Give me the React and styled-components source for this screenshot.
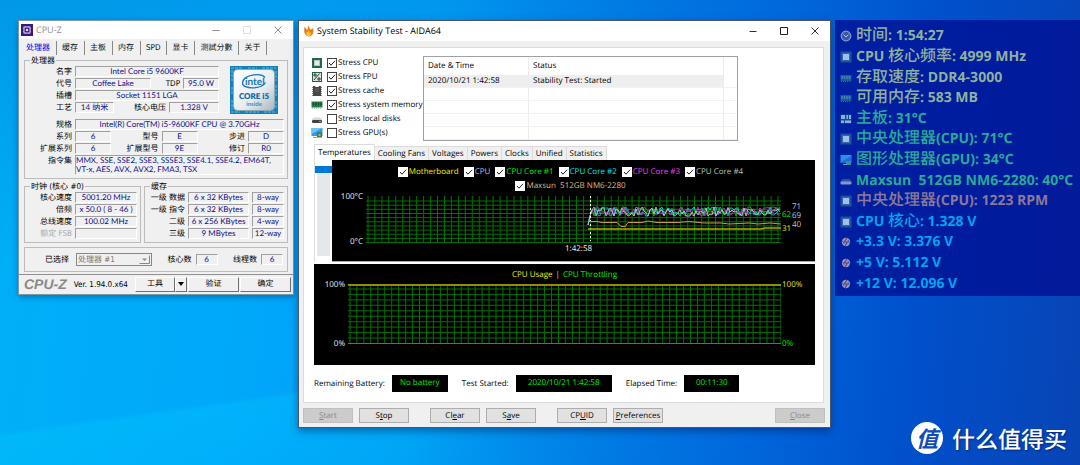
import { useState } from 'react'
import styled, { createGlobalStyle } from 'styled-components'

const coreColors = ['#00c800', '#00d8e0', '#e030e0', '#c8d4d8']

// repeatable jagged line for a core temperature
function coreLine(seed) {
    let value = seed * 7919
    const points = ['222,29', '224,20', '226,14']
    for (let x = 228; x <= 415; x += 2) {
        value = (value * 1103 + 12345) % 65521
        points.push(`${x},${11 + (value % 10)}`)
    }
    return points.join(' ')
}

const temperatureLegend = [
    { name: 'Motherboard', color: '#f0f000' },
    { name: 'CPU', color: '#a8c0f8' },
    { name: 'CPU Core #1', color: '#00f000' },
    { name: 'CPU Core #2', color: '#00ecf0' },
    { name: 'CPU Core #3', color: '#f040f0' },
    { name: 'CPU Core #4', color: '#b4c8b4' },
]

const sensors = [
    { icon: 'clock', text: '时间: 1:54:27', color: '#8fb09c' },
    { icon: 'chip', text: 'CPU 核心频率: 4999 MHz', color: '#8fb09c' },
    { icon: 'memory', text: '存取速度: DDR4-3000', color: '#8fb09c' },
    { icon: 'memory', text: '可用内存: 583 MB', color: '#8fb09c' },
    { icon: 'board', text: '主板: 31°C', color: '#2aa898' },
    { icon: 'chip', text: '中央处理器(CPU): 71°C', color: '#2aa898' },
    { icon: 'gpu', text: '图形处理器(GPU): 34°C', color: '#2aa898' },
    { icon: 'disk', text: 'Maxsun  512GB NM6-2280: 40°C', color: '#2aa898' },
    { icon: 'chip', text: '中央处理器(CPU): 1223 RPM', color: '#8c7898' },
    { icon: 'chip', text: 'CPU 核心: 1.328 V', color: '#00a4ec' },
    { icon: 'power', text: '+3.3 V: 3.376 V', color: '#00a4ec' },
    { icon: 'power', text: '+5 V: 5.112 V', color: '#00a4ec' },
    { icon: 'power', text: '+12 V: 12.096 V', color: '#00a4ec' },
]

const stressOptions = [
    { icon: 'cpu', name: 'Stress CPU', on: true },
    { icon: 'fpu', name: 'Stress FPU', on: true },
    { icon: 'cache', name: 'Stress cache', on: true },
    { icon: 'ram', name: 'Stress system memory', on: true },
    { icon: 'drive', name: 'Stress local disks', on: false },
    { icon: 'screen', name: 'Stress GPU(s)', on: false },
]

function SensorIcon({ kind }) {
    return (
        <svg width="12" height="12" viewBox="0 0 12 12" aria-hidden="true">
            {kind === 'clock' && (
                <g>
                    <circle cx="6" cy="6" r="4.8" fill="#3858b0" stroke="#8298c8" strokeWidth="1.2" />
                    <path d="M3.5 4.5 6 7l2.5-2.5" fill="none" stroke="#b4c4e4" />
                </g>
            )}
            {kind === 'chip' && (
                <g>
                    <rect x="0.5" y="0.5" width="11" height="11" fill="#18549c" />
                    <rect x="2" y="2" width="8" height="8" fill="#3068a4" />
                    <rect x="3" y="3" width="6" height="6" fill="#a4bcec" />
                </g>
            )}
            {kind === 'memory' && (
                <g>
                    <rect x="0.5" y="3" width="11" height="6" fill="#145c94" />
                    <path d="M2 4v3M4.5 4v3M7 4v3M9.500 4v3" stroke="#4880b4" strokeWidth="1.5" />
                    <path d="M1 9.5h10" stroke="#3870a4" strokeDasharray="1 1" />
                </g>
            )}
            {kind === 'board' && (
                <g>
                    <rect x="0.500" y="1.500" width="11" height="9" fill="#145090" />
                    <path d="M1 2h4v4H1zM6.500 2H8v4H6.500zM9 2h2v4H9zM1 7.500h3V10H1zM5 7.500h6V10H5z" fill="#88b0e0" />
                </g>
            )}
            {kind === 'gpu' && (
                <g>
                    <rect x="0.500" y="1" width="11" height="8" fill="#2890f0" />
                    <path d="M1 8 11 2v7H1z" fill="#1c6cd8" />
                    <rect x="6" y="7" width="5" height="4" fill="#3888a0" />
                    <path d="M3 10.500h4" stroke="#6c98d4" />
                </g>
            )}
            {kind === 'disk' && (
                <g>
                    <path d="M2.500 4h7L11.500 7H.5z" fill="#3050a8" />
                    <rect x="0.500" y="6.500" width="11" height="3" rx="1" fill="#8098d0" />
                </g>
            )}
            {kind === 'power' && (
                <g>
                    <circle cx="6" cy="6" r="4.200" fill="#8ca0cc" />
                    <path d="M7 2 4.200 6h3.200L5 10" fill="none" stroke="#783868" strokeWidth="1.200" />
                    <path d="M2.500 4.500 4 8M8 4l1.500 3.500" stroke="#3c58a8" />
                </g>
            )}
        </svg>
    )
}

function StressIcon({ kind }) {
    return (
        <svg width="12" height="12" viewBox="0 0 12 12" aria-hidden="true">
            {kind === 'cpu' && (
                <g>
                    <rect x="1" y="1" width="10" height="10" fill="#24684c" />
                    <rect x="3.500" y="3.500" width="5" height="5" fill="#e8ece8" stroke="#b4c4b8" />
                </g>
            )}
            {kind === 'fpu' && (
                <g>
                    <rect x="1" y="1" width="10" height="10" fill="#24604c" />
                    <rect x="2" y="2" width="8" height="8" fill="#dce4dc" />
                    <path d="M8.500 2.500 3 9M3 3h2v2H3zM7 7h2v2H7z" fill="none" stroke="#2c4038" />
                </g>
            )}
            {kind === 'cache' && (
                <g>
                    <path d="M2 1h2l.5 1h3L8 1h2v10H2z" fill="#484848" />
                    <path d="M1.500 2v9M10.500 2v9" stroke="#888" strokeDasharray="1 1" />
                    <path d="M4 4h4M4 6h4" stroke="#666" />
                </g>
            )}
            {kind === 'ram' && (
                <g>
                    <rect x="0.500" y="2.500" width="11" height="6" fill="#28804c" />
                    <path d="M2.500 3.500v3M5 3.500v3M7.500 3.500v3M10 3.500v3" stroke="#184c30" strokeWidth="1.400" />
                    <path d="M1 9h10" stroke="#78a884" strokeDasharray="1 1" />
                </g>
            )}
            {kind === 'drive' && (
                <g>
                    <path d="M2.500 4.500h7l2 2.500H.5z" fill="#d8d8d8" />
                    <rect x="1" y="7" width="10" height="3" rx="1" fill="#404440" />
                    <rect x="8" y="8" width="2" height="1" fill="#48c848" />
                </g>
            )}
            {kind === 'screen' && (
                <g>
                    <rect x="0.500" y="1" width="11" height="8" fill="#2c9ce4" />
                    <path d="M.5 1h11L.5 7z" fill="#6cc4f4" />
                    <rect x="6" y="5.500" width="5" height="5" fill="#38784c" />
                    <circle cx="8.500" cy="8" r="1.300" fill="#c8a848" />
                    <path d="M2 10.500h4" stroke="#88a0b0" />
                </g>
            )}
        </svg>
    )
}

function WindowButtons({ color, boxColor }) {
    return (
        <Controls>
            <ControlButton aria-label="Minimize">
                <svg width="8" height="8" viewBox="0 0 8 8"><path d="M0.500 4.500h7" stroke={color} /></svg>
            </ControlButton>
            <ControlButton aria-label="Maximize">
                <svg width="8" height="8" viewBox="0 0 8 8"><path d="M.5.5h7v7h-7z" fill="none" stroke={boxColor} /></svg>
            </ControlButton>
            <ControlButton aria-label="Close">
                <svg width="8" height="8" viewBox="0 0 8 8"><path d="m.5.5 7 7m0-7-7 7" stroke={color} /></svg>
            </ControlButton>
        </Controls>
    )
}

function CpuZ() {
    return (
        <CpuWindow>
            <CpuTitle>
                <svg width="12" height="12" viewBox="0 0 12 12" aria-hidden="true">
                    <rect width="12" height="12" fill="#381878" />
                    <rect x="3" y="3" width="6" height="6" fill="none" stroke="#e0d8f0" />
                    <path d="M2 4.500h1M2 7.500h1M9 4.500h1M9 7.500h1M4.500 2v1M7.500 2v1M4.500 9v1M7.500 9v1" stroke="#b8a8dc" />
                    <circle cx="6" cy="6" r="1.300" fill="#e0d8f0" />
                </svg>
                CPU-Z
                <WindowButtons color="#909090" boxColor="#e0e0e0" />
            </CpuTitle>
            <CpuTabs role="tablist">
                {['处理器', '缓存', '主板', '内存', 'SPD', '显卡', '测試分數', '关于'].map((name, i) => (
                    <CpuTab key={name} role="tab" $active={i === 0}>{name}</CpuTab>
                ))}
            </CpuTabs>
            <CpuPage>
                <Group>
                    <legend>处理器</legend>
                    <Split>
                        <Rows>
                            <Row><Label>名字</Label><Field>Intel Core i5 9600KF</Field></Row>
                            <Row><Label>代号</Label><Field>Coffee Lake</Field><Label $width={26}>TDP</Label><Field $width={36}>95.0 W</Field></Row>
                            <Row><Label>插槽</Label><Field>Socket 1151 LGA</Field></Row>
                            <Row><Label>工艺</Label><Field $width={39}>14 纳米</Field><Label $grow>核心电压</Label><Field $width={50}>1.328 V</Field></Row>
                        </Rows>
                        <IntelLogo />
                    </Split>
                    <Rows>
                        <Row><Label>规格</Label><Field>Intel(R) Core(TM) i5-9600KF CPU @ 3.70GHz</Field></Row>
                        <Row>
                            <Label>系列</Label><Field $width={36}>6</Field>
                            <Label $grow>型号</Label><Field $width={36}>E</Field>
                            <Label $grow>步进</Label><Field $width={36}>D</Field>
                        </Row>
                        <Row>
                            <Label>扩展系列</Label><Field $width={36}>6</Field>
                            <Label $grow>扩展型号</Label><Field $width={36}>9E</Field>
                            <Label $grow>修订</Label><Field $width={36}>R0</Field>
                        </Row>
                        <Row>
                            <Label>指令集</Label>
                            <Instructions>MMX, SSE, SSE2, SSE3, SSSE3, SSE4.1, SSE4.2, EM64T, VT-x, AES, AVX, AVX2, FMA3, TSX</Instructions>
                        </Row>
                    </Rows>
                </Group>
                <Halves>
                    <Group>
                        <legend>时钟 (核心 #0)</legend>
                        <Rows>
                            <Row><Label>核心速度</Label><Field>5001.20 MHz</Field></Row>
                            <Row><Label>倍频</Label><Field>x 50.0 ( 8 - 46 )</Field></Row>
                            <Row><Label>总线速度</Label><Field>100.02 MHz</Field></Row>
                            <Row><Label $off>额定 FSB</Label><Field /></Row>
                        </Rows>
                    </Group>
                    <Group>
                        <legend>缓存</legend>
                        <Rows>
                            <Row><Label $width={37}>一级 数据</Label><Field>6 x 32 KBytes</Field><Field $width={32}>8-way</Field></Row>
                            <Row><Label $width={37}>一级 指令</Label><Field>6 x 32 KBytes</Field><Field $width={32}>8-way</Field></Row>
                            <Row><Label $width={37}>二级</Label><Field>6 x 256 KBytes</Field><Field $width={32}>4-way</Field></Row>
                            <Row><Label $width={37}>三级</Label><Field>9 MBytes</Field><Field $width={32}>12-way</Field></Row>
                        </Rows>
                    </Group>
                </Halves>
                <SelectionBar>
                    <label htmlFor="processor">已选择</label>
                    <SelectBox>
                        <select id="processor" disabled defaultValue="1">
                            <option value="1">处理器 #1</option>
                        </select>
                        <svg width="11" height="9" viewBox="0 0 11 9" aria-hidden="true">
                            <path d="M0 0h11v9H0z" fill="#f0f0f0" />
                            <path d="M.5 8.500h10V.5" fill="none" stroke="#888" />
                            <path d="M3 3.500h5L5.500 6z" fill="#888" />
                        </svg>
                    </SelectBox>
                    <Label $grow>核心数</Label><Field $width={22}>6</Field>
                    <Label $grow>线程数</Label><Field $width={22}>6</Field>
                </SelectionBar>
            </CpuPage>
            <CpuFooter>
                <Brand>CPU-Z</Brand>
                <Version>Ver. 1.94.0.x64</Version>
                <ToolButtons>
                    <CpuButton>工具</CpuButton>
                    <ArrowButton aria-label="更多工具">
                        <svg width="6" height="4" viewBox="0 0 6 4"><path d="M0 0h6L3 4z" fill="#000" /></svg>
                    </ArrowButton>
                </ToolButtons>
                <CpuButton>验证</CpuButton>
                <CpuButton>确定</CpuButton>
            </CpuFooter>
        </CpuWindow>
    )
}

function IntelLogo() {
    return (
        <svg width="48" height="48" viewBox="0 0 48 48" role="img" aria-label="Intel Core i5 inside">
            <defs>
                <linearGradient id="plate" x1="0" y1="0" x2="1" y2="1">
                    <stop offset="0" stopColor="#ffffff" />
                    <stop offset="0.600" stopColor="#e8ecee" />
                    <stop offset="1" stopColor="#a8b4bc" />
                </linearGradient>
            </defs>
            <rect width="48" height="48" fill="#1480b8" />
            <path d="M1 2h12M18 2h9M32 2h14M1 46h9M15 46h14M34 46h12M2 4v12M2 21v8M2 34v10M46 5v10M46 19v12M46 35v8" stroke="#64b8e0" strokeDasharray="3 1" />
            <rect x="3.500" y="3.500" width="41" height="41" rx="4" fill="url(#plate)" stroke="#88a8b8" />
            <path d="M35 11.500c-4-5-22-3-22.500 5.500 0 6.500 19 6.500 23-.5" fill="none" stroke="#1478b8" strokeWidth="1.300" />
            <text x="15" y="19" fontSize="10" fontWeight="700" fill="#1478b8" fontFamily="Lato, sans-serif">intel</text>
            <text x="24" y="33" textAnchor="middle" fontSize="8" fontWeight="800" fill="#1068a8" fontFamily="Lato, sans-serif">CORE i5</text>
            <text x="24" y="40" textAnchor="middle" fontSize="6" fontWeight="700" fill="#3890c4" fontFamily="Lato, sans-serif">inside</text>
        </svg>
    )
}

function GridLines({ width, height, top, step }) {
    const columns = []
    const rows = []
    for (let x = 2; x < width; x += 6.95) columns.push(`M${x.toFixed(1)} 0V${height}`)
    for (let y = height - 0.5; y >= top; y -= step) rows.push(`M0 ${y.toFixed(1)}H${width}`)
    return <path d={columns.concat(rows).join('')} fill="none" stroke="#007400" />
}

function TemperatureChart() {
    return (
        <Plot>
            <Axis><span>100°C</span><span>0°C</span></Axis>
            <svg height="47" viewBox="0 0 415 47" preserveAspectRatio="none" role="img" aria-label="Temperatures">
                <GridLines width={415} height={47} top={4} step={4.15} />
                {coreColors.map((color, i) => (
                    <polyline key={color} points={coreLine(i + 1)} fill="none" stroke={color} strokeWidth="0.800" />
                ))}
                <path d="M224.500 0v45" stroke="#fff" strokeDasharray="2 2" />
                <path d="M222 25.500h9l5 1h15l4 4h4l3-4h14l6-1.500 9 1.500h20l12-1 15 1.500h17l8 1 20-1 9 1 12-1 11 1" fill="none" stroke="#c89850" />
                <path d="M222 33h173l4-1h16" fill="none" stroke="#b4a400" strokeWidth="1.500" />
            </svg>
            <Gutter>
                <Value $top={15} $left={1} $color="#00f000">62</Value>
                <Value $top={7} $left={11} $color="#a8c8e0">71</Value>
                <Value $top={16} $left={11} $color="#a8d0f8">69</Value>
                <Value $top={25} $left={11} $color="#e0b880">40</Value>
                <Value $top={29} $left={1} $color="#f0f000">31</Value>
            </Gutter>
        </Plot>
    )
}

function Check({ id, name, on, color }) {
    const [checked, setChecked] = useState(on)
    return (
        <CheckLabel htmlFor={id} $color={color}>
            <CheckBox>
                <input id={id} type="checkbox" checked={checked} onChange={() => setChecked(!checked)} />
                {checked && <svg width="10" height="10" viewBox="0 0 10 10" aria-hidden="true"><path d="m2 5 2 2.200L8 2.800" fill="none" stroke="#222" /></svg>}
            </CheckBox>
            {name}
        </CheckLabel>
    )
}

function StabilityTest() {
    return (
        <AidaWindow>
            <AidaTitle>
                <svg width="10" height="12" viewBox="0 0 10 12" aria-hidden="true">
                    <path d="M.5 2c1 .5 2 2 2.500 3C4 4 4 2 3.500.500 5 1.500 6 3 6 4.500 7 4.500 8 4 9 3c1.200 3 .5 8-4 8.500C0 11-.2 6 .5 2z" fill="#f07818" />
                    <path d="M2.500 7c1 0 1.500-.5 2-2 1 1 1 2 1 3 .5 0 1-.5 1.500-1 .5 2-.5 4-2.500 4s-2.500-2-2-4z" fill="#fcc838" />
                </svg>
                System Stability Test - AIDA64
                <WindowButtons color="#333" boxColor="#222" />
            </AidaTitle>
            <AidaPanel>
                <TopArea>
                    <StressList>
                        {stressOptions.map((option, i) => (
                            <li key={option.name}>
                                <StressIcon kind={option.icon} />
                                <Check id={`stress-${i}`} name={option.name} on={option.on} />
                            </li>
                        ))}
                    </StressList>
                    <LogTable>
                        <thead>
                            <tr><th>Date &amp; Time</th><th>Status</th><th aria-label="Notes" /></tr>
                        </thead>
                        <tbody>
                            <tr><td>2020/10/21 1:42:58</td><td>Stability Test: Started</td><td /></tr>
                            <tr><td /><td /><td /></tr>
                            <tr><td /><td /><td /></tr>
                            <tr><td /><td /><td /></tr>
                            <tr><td /><td /><td /></tr>
                        </tbody>
                    </LogTable>
                </TopArea>
                <AidaTabs role="tablist">
                    {['Temperatures', 'Cooling Fans', 'Voltages', 'Powers', 'Clocks', 'Unified', 'Statistics'].map((name, i) => (
                        <AidaTab key={name} role="tab" $active={i === 0}>{name}</AidaTab>
                    ))}
                </AidaTabs>
                <TemperaturePage>
                    <DeviceTree><DeviceSelected /><DeviceRest /></DeviceTree>
                    <TemperaturePanel>
                        <Legend>
                            {temperatureLegend.map((item, i) => (
                                <Check key={item.name} id={`temp-${i}`} name={item.name} color={item.color} on />
                            ))}
                        </Legend>
                        <Legend>
                            <Check id="temp-disk" name="Maxsun  512GB NM6-2280" color="#e0b880" on />
                        </Legend>
                        <TemperatureChart />
                        <StartTime>1:42:58</StartTime>
                    </TemperaturePanel>
                </TemperaturePage>
                <UsagePanel>
                    <UsageTitle><b>CPU Usage</b><i>|</i><span>CPU Throttling</span></UsageTitle>
                    <Plot>
                        <Axis><span>100%</span><span>0%</span></Axis>
                        <svg height="61" viewBox="0 0 433 61" preserveAspectRatio="none" role="img" aria-label="CPU Usage">
                            <GridLines width={433} height={60} top={3} step={5.45} />
                            <path d="M0 59.500h433" stroke="#00b400" />
                            <path d="M0 1h433" stroke="#948c00" strokeWidth="2" />
                        </svg>
                        <Gutter>
                            <Value $top={-3} $left={1} $color="#e6e600">100%</Value>
                            <Value $top={56} $left={1} $color="#00f000">0%</Value>
                        </Gutter>
                    </Plot>
                </UsagePanel>
                <StatusBar>
                    <span>Remaining Battery:</span><Readout $width={56}>No battery</Readout>
                    <span>Test Started:</span><Readout $width={96}>2020/10/21 1:42:58</Readout>
                    <span>Elapsed Time:</span><Readout $width={55}>00:11:30</Readout>
                </StatusBar>
            </AidaPanel>
            <AidaButtons>
                <ButtonPair>
                    <AidaButton disabled><u>S</u>tart</AidaButton>
                    <AidaButton>S<u>t</u>op</AidaButton>
                </ButtonPair>
                <ButtonPair>
                    <AidaButton>Cl<u>e</u>ar</AidaButton>
                    <AidaButton>S<u>a</u>ve</AidaButton>
                </ButtonPair>
                <ButtonPair>
                    <AidaButton>CP<u>U</u>ID</AidaButton>
                    <AidaButton><u>P</u>references</AidaButton>
                </ButtonPair>
                <AidaButton disabled><u>C</u>lose</AidaButton>
            </AidaButtons>
        </AidaWindow>
    )
}

// Chinese runs are set larger and lighter than the bold latin text
function SensorText({ text }) {
    return (
        <span>
            {text.split(/([\u4e00-\u9fff]+)/).map((part, i) => i % 2 ? <Han key={i}>{part}</Han> : part)}
        </span>
    )
}

function App() {
    return (
        <Desktop>
            <GlobalStyle />
            <CpuZ />
            <StabilityTest />
            <SensorPanel>
                {sensors.map((sensor, i) => (
                    <Sensor key={i} $color={sensor.color}>
                        <SensorIcon kind={sensor.icon} />
                        <SensorText text={sensor.text} />
                    </Sensor>
                ))}
            </SensorPanel>
            <Watermark>
                <Badge>值</Badge>
                什么值得买
            </Watermark>
        </Desktop>
    )
}

const GlobalStyle = createGlobalStyle`
    * {
        box-sizing:border-box;
    }
    body {
        margin:0;
        background-color:#0070d8;
        text-rendering:geometricPrecision;
    }
    button, input, select {
        font:inherit;
        margin:0;
        padding:0;
        text-rendering:inherit;
    }
    ul {
        list-style:none;
        margin:0;
        padding:0;
    }
    svg {
        flex:none;
    }
`

const Desktop = styled.main`
    position:relative;
    min-height:100vh;
    padding:20px 0 20px 18px;
    display:grid;
    grid-template-columns:276px minmax(500px, 1fr) 245px;
    gap:4px;
    align-items:start;
    background:
        linear-gradient(160deg, rgba(0,70,170,0.22) 0%, transparent 32%),
        linear-gradient(96deg, transparent 40%, #0068dc 70%, #0050cc 84%, #0844b4 100%),
        linear-gradient(172deg, transparent 70%, rgba(0,220,255,0.2) 71%, transparent 100%),
        linear-gradient(96deg, #00b0f8 0%, #00a8fa 25%, #0090ee 60%);
`

const CpuWindow = styled.section`
    background-color:#f0f0f0;
    border:1px solid #7c98a8;
    box-shadow:0 2px 6px rgba(0,30,80,0.4);
    font:8px/11px "DejaVu Sans Condensed", "Noto Sans CJK SC", sans-serif;
    color:#000;
`

const CpuTitle = styled.header`
    display:flex;
    align-items:center;
    gap:3px;
    height:18px;
    padding:0 11px 0 2px;
    background-color:white;
    color:#909090;
    font:9px/14px "Open Sans", sans-serif;
`

const Controls = styled.div`
    display:flex;
    gap:23px;
    margin-left:auto;
`

const ControlButton = styled.button`
    display:grid;
    place-items:center;
    width:8px;
    height:8px;
    border:0;
    background:none;
`

const CpuTabs = styled.div`
    display:flex;
    padding:2px 2px 0;
`

const CpuTab = styled.button`
    height:14px;
    padding:0 6px 0 5px;
    border:0;
    border-right:1px solid #888;
    background:none;
    color:${props => props.$active ? '#0000f0' : '#111'};
    line-height:12px;
    white-space:nowrap;
`

const CpuPage = styled.div`
    padding:0 5px 2px;
    border-bottom:1px solid #909090;
`

const Group = styled.fieldset`
    min-width:0;
    margin:0;
    padding:0 3px 3px;
    border:1px solid #bcbcbc;

    legend {
        margin-left:2px;
        padding:0 1px;
        line-height:11px;
    }
`

const Split = styled.div`
    display:flex;
    align-items:flex-start;
    gap:11px;
    padding-right:6px;
    margin-bottom:5px;

    > :first-child {
        flex:1;
    }
`

const Halves = styled.div`
    display:grid;
    grid-template-columns:117px 1fr;
    gap:3px;
    margin-top:2px;
`

const Rows = styled.div`
    display:grid;
    gap:1px;
`

const Row = styled.div`
    display:flex;
    gap:3px;
`

const Label = styled.span`
    ${props => props.$grow ? 'flex:1;' : `width:${props.$width || 44}px; flex:none;`}
    text-align:right;
    white-space:nowrap;
    color:${props => props.$off ? '#a8a8a8' : '#000'};
`

const Field = styled.span`
    ${props => props.$width ? `width:${props.$width}px; flex:none;` : 'flex:1; min-width:0;'}
    height:11px;
    border:1px solid;
    border-color:#a0a0a0 #fff #fff #a0a0a0;
    color:#10108c;
    font-family:Lato, "Noto Sans CJK SC", sans-serif;
    line-height:9px;
    text-align:center;
    white-space:nowrap;
`

const Instructions = styled(Field)`
    height:20px;
    text-align:left;
    white-space:normal;
`

const SelectionBar = styled.div`
    display:flex;
    align-items:center;
    gap:4px;
    margin-top:4px;
    padding:5px 4px 5px 20px;
    border:1px solid #bcbcbc;
`

const SelectBox = styled.div`
    position:relative;
    margin-left:3px;

    select {
        display:block;
        appearance:none;
        width:76px;
        height:13px;
        padding-left:1px;
        border:1px solid #888;
        border-radius:0;
        background-color:#f0f0f0;
        color:#777;
        opacity:1;
        line-height:11px;
    }

    svg {
        position:absolute;
        right:2px;
        top:2px;
    }
`

const CpuFooter = styled.footer`
    display:flex;
    align-items:center;
    gap:1px;
    height:19px;
    padding:0 2px 1px 5px;
`

const Brand = styled.span`
    color:#888;
    font:italic 700 14px/16px "Liberation Sans", sans-serif;
`

const Version = styled.span`
    flex:1;
    padding-left:6px;
    white-space:nowrap;
`

const CpuButton = styled.button`
    width:51px;
    height:15px;
    border:1px solid;
    border-color:#fff #707070 #707070 #fff;
    background-color:#f0f0f0;
    line-height:12px;
`

const ToolButtons = styled.div`
    display:flex;

    ${CpuButton} {
        width:40px;
    }
`

const ArrowButton = styled(CpuButton)`
    && {
        width:12px;
    }
    display:grid;
    place-items:center;
`

const AidaWindow = styled.section`
    background-color:#f0f0f0;
    border:1px solid #48586c;
    box-shadow:0 3px 8px rgba(0,20,80,0.45);
    font:8px/12px "Open Sans", sans-serif;
    color:#000;
`

const AidaTitle = styled.header`
    display:flex;
    align-items:center;
    gap:3px;
    height:20px;
    padding:0 11px 0 5px;
    background-color:white;
    font-size:9px;
`

const AidaPanel = styled.div`
    margin:6px 6px 0 4px;
    padding:8px 8px 10px 10px;
    border:1px solid #dcdcdc;
    background-color:white;
`

const TopArea = styled.div`
    display:grid;
    grid-template-columns:112px minmax(0, 315px);
    align-items:start;
    margin-left:-3px;
`

const StressList = styled.ul`
    li {
        display:flex;
        align-items:center;
        gap:4px;
        height:14px;
    }
`

const CheckLabel = styled.label`
    display:flex;
    align-items:center;
    gap:1px;
    color:${props => props.$color || '#000'};
    white-space:pre;
`

const CheckBox = styled.span`
    position:relative;
    display:block;
    width:10px;
    height:10px;

    input {
        display:block;
        appearance:none;
        width:10px;
        height:10px;
        border:1px solid #444;
        background-color:white;
    }

    svg {
        position:absolute;
        inset:0;
    }
`

const LogTable = styled.table`
    width:100%;
    height:84px;
    border:1px solid #a0a0a8;
    border-spacing:0;
    table-layout:fixed;

    th, td {
        height:13px;
        padding:0 4px;
        border-right:1px solid #ececec;
        border-bottom:1px solid #f2f2f2;
        font-weight:400;
        text-align:left;
        white-space:nowrap;
    }
    th {
        height:18px;
        border-bottom:0;
    }
    th:first-child {
        width:105px;
    }
    th:last-child {
        width:13px;
    }
    th:last-child, td:last-child {
        padding:0;
        border-right:0;
    }
    tbody tr:first-child td:not(:last-child) {
        background-color:#eeeeee;
    }
`

const AidaTabs = styled.div`
    display:flex;
    align-items:flex-end;
    height:16px;
    margin-top:3px;
`

const AidaTab = styled.button`
    height:${props => props.$active ? 16 : 14}px;
    padding:0 3px;
    border:1px solid #dcdcdc;
    border-left-width:${props => props.$active ? 1 : 0}px;
    border-bottom:0;
    background-color:${props => props.$active ? 'white' : '#f0f0f0'};
    white-space:nowrap;
`

const TemperaturePage = styled.div`
    display:flex;
    border-left:1px solid #dcdcdc;
`

const DeviceTree = styled.div`
    display:flex;
    flex-direction:column;
    width:17px;
    padding:6px 0;
`

const DeviceSelected = styled.div`
    height:7px;
    background-color:#0078d7;
`

const DeviceRest = styled.div`
    flex:1;
    margin:0 2px;
    background-color:#e4e8ea;
`

const TemperaturePanel = styled.div`
    flex:1;
    padding:5px 0 6px;
    background-color:black;
    border-bottom:1px solid #a8a8a8;
`

const Legend = styled.div`
    display:flex;
    justify-content:center;
    gap:5px;
    height:14px;
    padding-right:6px;

    input {
        border-color:white;
    }
`

const Plot = styled.div`
    display:grid;
    grid-template-columns:34px 1fr 34px;
    margin-top:3px;

    > svg {
        width:100%;
        display:block;
    }
`

const Axis = styled.div`
    display:flex;
    flex-direction:column;
    justify-content:space-between;
    margin:-5px 0;
    padding-right:3px;
    color:#f0f0f0;
    text-align:right;
`

const Gutter = styled.div`
    position:relative;
`

const Value = styled.span`
    position:absolute;
    top:${props => props.$top}px;
    left:${props => props.$left}px;
    color:${props => props.$color};
    line-height:8px;
`

const StartTime = styled.div`
    padding-left:10px;
    color:#f0f0f0;
    text-align:center;
`

const UsagePanel = styled.div`
    margin-top:2px;
    padding:5px 0 20px;
    background-color:black;
`

const UsageTitle = styled.div`
    display:flex;
    justify-content:center;
    gap:3px;

    b {
        color:#f0f000;
        font-weight:400;
    }
    i {
        color:#d0d0d0;
        font-style:normal;
    }
    span {
        color:#00f000;
    }
`

const StatusBar = styled.div`
    display:flex;
    align-items:center;
    gap:7px;
    margin-top:10px;
    white-space:nowrap;
`

const Readout = styled.output`
    width:${props => props.$width}px;
    margin-right:7px;
    padding:2px 0 3px;
    background-color:black;
    color:#00f000;
    text-align:center;
`

const AidaButtons = styled.footer`
    display:flex;
    gap:21px;
    padding:5px 5px 4px 4px;

    > :last-child {
        margin-left:auto;
    }
`

const ButtonPair = styled.div`
    display:flex;
    gap:6px;
`

const AidaButton = styled.button`
    width:50px;
    height:15px;
    border:1px solid #adadad;
    background-color:#e1e1e1;
    color:#000;
    line-height:12px;

    &:disabled {
        border-color:#bfbfbf;
        background-color:#cccccc;
        color:#888;
    }
`

const SensorPanel = styled.ul`
    display:grid;
    min-height:276px;
    padding:6px 0 2px 5px;
    background-color:rgba(0,16,148,0.8);
`

const Sensor = styled.li`
    display:flex;
    align-items:center;
    gap:4px;
    color:${props => props.$color};
    font:700 14px/20px "Open Sans", "Noto Sans CJK SC", sans-serif;
    white-space:pre;
`

const Han = styled.span`
    font:500 16px/14px "Noto Sans CJK SC", sans-serif;
`

const Watermark = styled.div`
    position:absolute;
    right:13px;
    bottom:9px;
    display:flex;
    align-items:center;
    gap:9px;
    color:white;
    font:500 23px/36px "Noto Sans CJK SC", sans-serif;
    text-shadow:1px 1px 2px rgba(0,20,80,0.6);
`

const Badge = styled.span`
    display:grid;
    place-items:center;
    width:32px;
    height:32px;
    border-radius:50%;
    background-color:white;
    color:#0c4cbc;
    font:italic 700 22px/30px "Noto Sans CJK SC", sans-serif;
    text-shadow:none;
`

export default App
